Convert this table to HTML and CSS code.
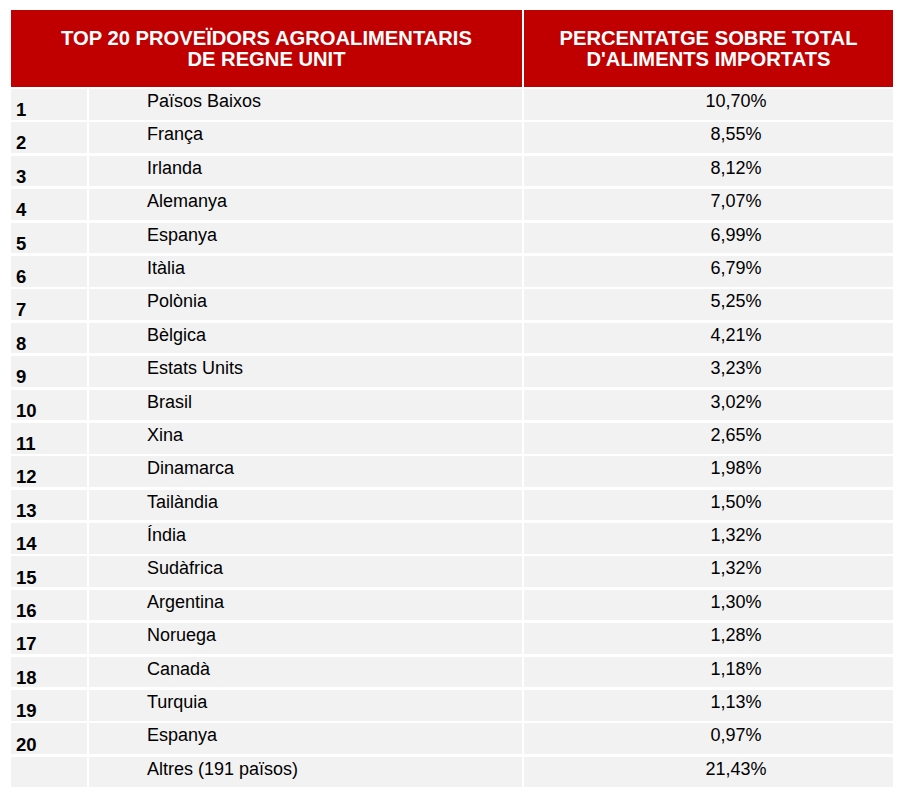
FILE: index.html
```html
<!DOCTYPE html>
<html lang="ca">
<head>
<meta charset="utf-8">
<title>Top 20 proveïdors agroalimentaris de Regne Unit</title>
<link rel="stylesheet" href="styles.css">
</head>
<body>
<div class="table">
  <div class="head">
    <div class="hcell hcell-name">TOP 20 PROVEÏDORS AGROALIMENTARIS<br>DE REGNE UNIT</div>
    <div class="hcell hcell-pct">PERCENTATGE SOBRE TOTAL<br>D'ALIMENTS IMPORTATS</div>
  </div>
  <div class="body">
    <div class="num">1</div><div class="country">Països Baixos</div><div class="pct">10,70%</div>
    <div class="num">2</div><div class="country">França</div><div class="pct">8,55%</div>
    <div class="num">3</div><div class="country">Irlanda</div><div class="pct">8,12%</div>
    <div class="num">4</div><div class="country">Alemanya</div><div class="pct">7,07%</div>
    <div class="num">5</div><div class="country">Espanya</div><div class="pct">6,99%</div>
    <div class="num">6</div><div class="country">Itàlia</div><div class="pct">6,79%</div>
    <div class="num">7</div><div class="country">Polònia</div><div class="pct">5,25%</div>
    <div class="num">8</div><div class="country">Bèlgica</div><div class="pct">4,21%</div>
    <div class="num">9</div><div class="country">Estats Units</div><div class="pct">3,23%</div>
    <div class="num">10</div><div class="country">Brasil</div><div class="pct">3,02%</div>
    <div class="num">11</div><div class="country">Xina</div><div class="pct">2,65%</div>
    <div class="num">12</div><div class="country">Dinamarca</div><div class="pct">1,98%</div>
    <div class="num">13</div><div class="country">Tailàndia</div><div class="pct">1,50%</div>
    <div class="num">14</div><div class="country">Índia</div><div class="pct">1,32%</div>
    <div class="num">15</div><div class="country">Sudàfrica</div><div class="pct">1,32%</div>
    <div class="num">16</div><div class="country">Argentina</div><div class="pct">1,30%</div>
    <div class="num">17</div><div class="country">Noruega</div><div class="pct">1,28%</div>
    <div class="num">18</div><div class="country">Canadà</div><div class="pct">1,18%</div>
    <div class="num">19</div><div class="country">Turquia</div><div class="pct">1,13%</div>
    <div class="num">20</div><div class="country">Espanya</div><div class="pct">0,97%</div>
    <div class="num"></div><div class="country">Altres (191 països)</div><div class="pct">21,43%</div>
  </div>
</div>
</body>
</html>
```

FILE: styles.css
```css
html, body {
  margin: 0;
  padding: 0;
  background: #ffffff;
}

body {
  font-family: "Liberation Sans", Arial, sans-serif;
  color: #000000;
  padding: 10px 0 0 11px;
}

.table {
  width: 882px;
}

.head {
  display: grid;
  grid-template-columns: 511px 369px;
  column-gap: 2px;
  height: 77px;
  margin-bottom: 2px;
}

.hcell {
  background: #c00000;
  color: #ffffff;
  font-weight: bold;
  font-size: 20.2px;
  line-height: 21px;
  text-align: center;
  display: flex;
  align-items: center;
  justify-content: center;
}

.body {
  display: grid;
  grid-template-columns: 76px 433px 369px;
  grid-auto-rows: 30.6px;
  column-gap: 2px;
  row-gap: 2.8px;
}

.num,
.country,
.pct {
  background: #f2f2f2;
}

.num {
  font-weight: bold;
  font-size: 18.5px;
  line-height: 18px;
  padding-left: 5px;
  display: flex;
  align-items: flex-end;
  padding-bottom: 0.5px;
}

.country {
  font-size: 18px;
  line-height: 20px;
  padding: 2px 0 0 58px;
}

.pct {
  font-size: 18px;
  line-height: 20px;
  padding: 2px 0 0 55px;
  text-align: center;
}
```
